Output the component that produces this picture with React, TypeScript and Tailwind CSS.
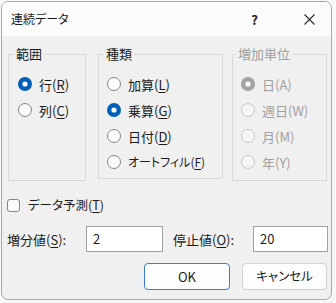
import React from "react";

const Radio = ({ checked, disabled }: { checked?: boolean; disabled?: boolean }) => {
  const accent = disabled ? "#a3a3a3" : "#005fb8";
  return (
    <svg width="14" height="14" viewBox="0 0 14 14" className="shrink-0">
      {checked ? (
        <>
          <circle cx="7" cy="7" r="7" fill={accent} />
          <circle cx="7" cy="7" r="2.6" fill="#ffffff" />
        </>
      ) : (
        <circle
          cx="7"
          cy="7"
          r="6.5"
          fill={disabled ? "#f5f5f5" : "#fbfbfb"}
          stroke={disabled ? "#c6c6c6" : "#858585"}
          strokeWidth="1"
        />
      )}
    </svg>
  );
};

const Row = ({
  checked,
  disabled,
  children,
  size = "text-[13px]",
}: {
  checked?: boolean;
  disabled?: boolean;
  children: React.ReactNode;
  size?: string;
}) => (
  <div className={`flex h-[26px] items-center gap-[7px] ${disabled ? "text-[#a0a0a0]" : "text-[#1b1b1b]"}`}>
    <Radio checked={checked} disabled={disabled} />
    <span className={`leading-none ${size}`}>{children}</span>
  </div>
);

const U = ({ children }: { children: React.ReactNode }) => (
  <span className="underline underline-offset-[2px]">{children}</span>
);

export default function App() {
  return (
    <div className="w-[336px] h-[303px] bg-[#f7f7f7] pt-[1px] pl-[1px] font-['Noto_Sans_CJK_JP','Noto_Sans',sans-serif] text-[13px] text-[#1b1b1b] [font-feature-settings:'palt']">
      <div className="w-[331px] h-[299px] border border-[#a9a9a9] rounded-[7px] overflow-hidden bg-[#f0f0f0] flex flex-col">
        {/* title bar */}
        <div className="h-[34px] bg-[#fbfbfb] flex items-center shrink-0">
          <span className="ml-[9px] text-[12px] leading-none">連続データ</span>
          <span className="ml-auto mr-[46px] text-[13px] font-semibold leading-none text-[#222]">?</span>
          <svg width="11" height="11" viewBox="0 0 11 11" className="mr-[16px]">
            <path d="M0.5 0.5 L10.5 10.5 M10.5 0.5 L0.5 10.5" stroke="#2a2a2a" strokeWidth="1.1" />
          </svg>
        </div>

        {/* body */}
        <div className="flex flex-col">
          <div className="flex mt-[18px] ml-[6px]">
            <div className="relative w-[78px] h-[127px] border border-[#d9d9d9] pl-[9px] pt-[16px]">
              <span className="absolute left-[5px] top-[-9px] bg-[#f0f0f0] px-[2px] leading-[16px]">範囲</span>
              <Row checked>
                行(<U>R</U>)
              </Row>
              <Row>
                列(<U>C</U>)
              </Row>
            </div>
            <div className="relative ml-[12px] w-[125px] h-[125px] border border-[#d9d9d9] pl-[8px] pt-[16px]">
              <span className="absolute left-[5px] top-[-9px] bg-[#f0f0f0] px-[2px] leading-[16px]">種類</span>
              <Row>
                加算(<U>L</U>)
              </Row>
              <Row checked>
                乗算(<U>G</U>)
              </Row>
              <Row>
                日付(<U>D</U>)
              </Row>
              <Row size="text-[12px]">
                オートフィル(<U>F</U>)
              </Row>
            </div>
            <div className="relative ml-[9px] w-[95px] h-[127px] border border-[#d9d9d9] pl-[8px] pt-[16px]">
              <span className="absolute left-[3px] top-[-9px] bg-[#f0f0f0] px-[2px] leading-[16px] text-[#a0a0a0]">
                増加単位
              </span>
              <Row checked disabled>
                日(A)
              </Row>
              <Row disabled>週日(W)</Row>
              <Row disabled>月(M)</Row>
              <Row disabled>年(Y)</Row>
            </div>
          </div>

          <div className="flex items-center h-[18px] mt-[15px] ml-[5px] gap-[8px]">
            <div className="w-[13px] h-[13px] rounded-[3px] border border-[#858585] bg-[#fbfbfb]" />
            <span className="leading-none text-[12.5px]">
              データ予測(<U>T</U>)
            </span>
          </div>

          <div className="flex items-center mt-[12px] ml-[5px] h-[26px]">
            <span className="w-[79px] leading-none">
              増分値(<U>S</U>):
            </span>
            <div className="w-[77px] h-[26px] bg-white border border-[#a0a0a0] flex items-center pl-[6px] text-[13px]">
              2
            </div>
            <span className="ml-[10px] w-[80px] leading-none">
              停止値(<U>O</U>):
            </span>
            <div className="w-[75px] h-[26px] bg-white border border-[#a0a0a0] flex items-center pl-[6px] text-[13px]">
              20
            </div>
          </div>

          <div className="flex mt-[11px] ml-[142px] gap-[12px]">
            <div className="w-[86px] h-[27px] rounded-[4px] border-[1.5px] border-[#3a7dc9] bg-[#fdfdfd] flex items-center justify-center text-[13px]">
              OK
            </div>
            <div className="w-[85px] h-[27px] rounded-[4px] border border-[#d0d0d0] bg-[#fdfdfd] flex items-center justify-center text-[12.5px]">
              キャンセル
            </div>
          </div>
        </div>
      </div>
    </div>
  );
}
